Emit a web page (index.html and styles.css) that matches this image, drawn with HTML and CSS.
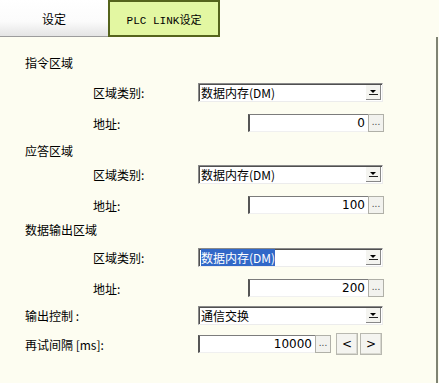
FILE: index.html
```html
<!DOCTYPE html>
<html>
<head>
    <meta charset="utf-8">
    <title>PLC LINK设定</title>
    <link rel="stylesheet" href="styles.css">
</head>
<body>
    <div class="tabs">
        <div class="tab">设定</div>
        <div class="tab active">PLC LINK设定</div>
        <div class="tab-fill"></div>
    </div>

    <div class="panel">
        <div class="row title">指令区域</div>
        <div class="row gap-10">
            <span class="label sub">区域类别:</span>
            <div class="select"><span class="value">数据内存(DM)</span><span class="drop"></span></div>
        </div>
        <div class="row">
            <span class="label sub">地址:</span>
            <div class="num short"><span class="box">0</span><span class="dots">...</span></div>
        </div>

        <div class="row title gap-7">应答区域</div>
        <div class="row gap-4">
            <span class="label sub">区域类别:</span>
            <div class="select"><span class="value">数据内存(DM)</span><span class="drop"></span></div>
        </div>
        <div class="row">
            <span class="label sub">地址:</span>
            <div class="num short"><span class="box">100</span><span class="dots">...</span></div>
        </div>

        <div class="row title gap-4">数据输出区域</div>
        <div class="row gap-8">
            <span class="label sub">区域类别:</span>
            <div class="select"><span class="value selected">数据内存(DM)</span><span class="drop"></span></div>
        </div>
        <div class="row">
            <span class="label sub">地址:</span>
            <div class="num short"><span class="box">200</span><span class="dots">...</span></div>
        </div>

        <div class="row gap-7">
            <span class="label">输出控制 :</span>
            <div class="select"><span class="value">通信交换</span><span class="drop"></span></div>
        </div>
        <div class="row gap-9">
            <span class="label">再试间隔 [ms]:</span>
            <div class="num long"><span class="box">10000</span><span class="dots">...</span></div>
            <div class="spin">
                <span class="step">&lt;</span>
                <span class="step">&gt;</span>
            </div>
        </div>
    </div>
</body>
</html>
```

FILE: styles.css
```css
body {
    margin: 0;
    background: #fdfdf1;
    font-family: "Noto Sans CJK SC", "DejaVu Sans", sans-serif;
    font-size: 12px;
    color: #000;
}
.tabs {
    display: flex;
    height: 37px;
}
.tab {
    width: 108px;
    display: flex;
    align-items: center;
    justify-content: center;
    background: linear-gradient(#ffffff 0%, #fbfbfb 60%, #e4e4e4 100%);
    border-bottom: 1px solid #9c9c9c;
    box-sizing: border-box;
}
.tab.active {
    width: 112px;
    background: #e3f7a2;
    border: 2px solid #55641c;
    font-family: "Liberation Mono", "Noto Sans CJK SC", monospace;
    font-size: 11px;
}
.tab-fill {
    flex: 1;
}
.panel {
    width: 438px;
    height: 346px;
    box-sizing: border-box;
    border-right: 2px solid #7f8373;
    padding: 15px 0 0 25px;
}

/* rows: 20px tall, spacing follows the dialog */
.row {
    display: flex;
    align-items: center;
    height: 20px;
    margin-top: 11px;
}
.panel .row:first-child {
    margin-top: 0;
}
.row.gap-4 { margin-top: 4px; }
.row.gap-7 { margin-top: 7px; }
.row.gap-8 { margin-top: 8px; }
.row.gap-9 { margin-top: 9px; }
.row.gap-10 { margin-top: 10px; }

.label {
    width: 173px;
    flex: none;
}
.label.sub {
    width: 105px;
    margin-left: 68px;
}
.select {
    width: 185px;
    height: 19px;
    box-sizing: border-box;
    display: flex;
    align-items: center;
    background: #fff;
    border: 1px solid;
    border-color: #8a8a8a #ececec #ececec #8a8a8a;
    box-shadow: inset 1px 1px 0 #505050;
    padding-left: 2px;
}
.value {
    flex: 1;
}
.value.selected {
    flex: none;
    background: #3168c8;
    color: #fff;
    margin-right: auto;
}
.drop {
    width: 15px;
    height: 15px;
    margin-right: 1px;
    position: relative;
    background: #f4f4f0;
    box-shadow: inset -1px -1px 0 #888;
}
.drop::before {
    content: "";
    position: absolute;
    left: 4px;
    top: 5px;
    border-left: 3px solid transparent;
    border-right: 3px solid transparent;
    border-top: 3px solid #000;
}
.drop::after {
    content: "";
    position: absolute;
    left: 3px;
    top: 9px;
    width: 9px;
    height: 1px;
    background: #222;
}
.num {
    display: flex;
    height: 18px;
}
.num.short {
    margin-left: 50px;
}
.box {
    width: 120px;
    box-sizing: border-box;
    background: #fff;
    border-top: 1px solid #7c7c7c;
    border-left: 2px solid #555;
    border-bottom: 1px solid #f0f0f0;
    text-align: right;
    padding-right: 3px;
    line-height: 17px;
    font-family: "DejaVu Sans", sans-serif;
    font-size: 12px;
}
.num.long .box {
    width: 117px;
}
.dots {
    width: 16px;
    box-sizing: border-box;
    background: #f2f2ee;
    border: 1px solid #b0b0a8;
    color: #555;
    font-size: 10px;
    line-height: 12px;
    text-align: center;
}
.spin {
    display: flex;
    gap: 2px;
    margin-left: 5px;
}
.step {
    width: 22px;
    height: 22px;
    box-sizing: border-box;
    background: #f4f4f0;
    border: 1px solid #b8b8b0;
    box-shadow: inset -1px -1px 0 #d8d8d0;
    display: flex;
    align-items: center;
    justify-content: center;
    font-family: "DejaVu Sans", sans-serif;
    font-size: 12px;
}
```
